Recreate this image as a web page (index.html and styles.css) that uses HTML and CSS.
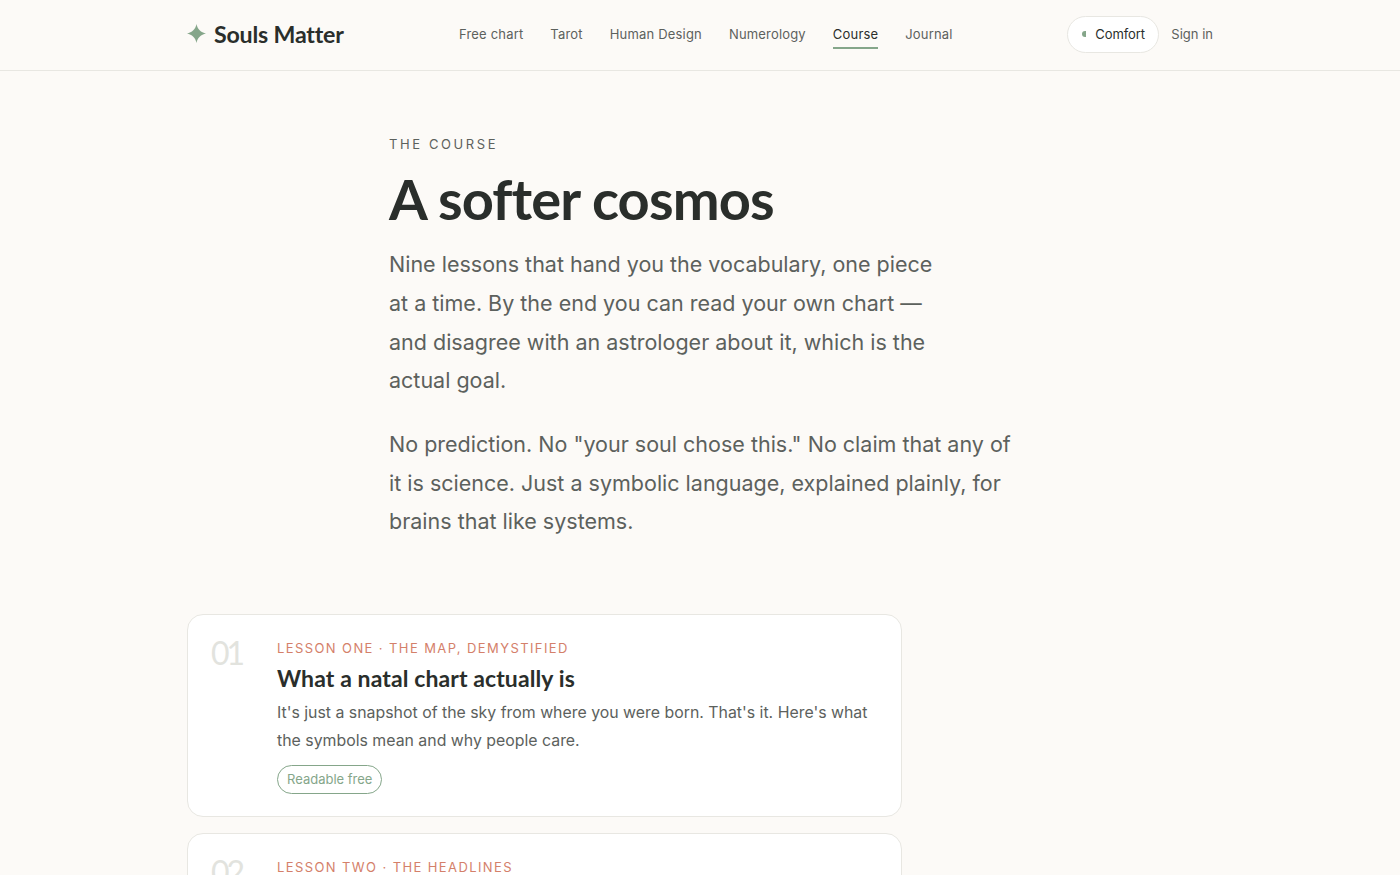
FILE: index.html
```html
<!DOCTYPE html>
<html lang="en">
<head>
<meta charset="utf-8">
<title>Souls Matter</title>
<link rel="stylesheet" href="styles.css">
</head>
<body>
<header class="site-header">
  <div class="header-inner">
    <a class="logo" href="#">
      <svg class="logo-star" viewBox="0 0 20 20" width="19" height="19"><path d="M10 0 C10.9 5.2 14.8 9.1 20 10 C14.8 10.9 10.9 14.8 10 20 C9.1 14.8 5.2 10.9 0 10 C5.2 9.1 9.1 5.2 10 0Z"/></svg>
      <span>Souls Matter</span>
    </a>
    <nav class="nav">
      <a href="#">Free chart</a>
      <a href="#">Tarot</a>
      <a href="#">Human Design</a>
      <a href="#">Numerology</a>
      <a href="#" class="active">Course</a>
      <a href="#">Journal</a>
    </nav>
    <div class="header-actions">
      <button class="comfort"><span class="comfort-dot"></span>Comfort</button>
      <a class="signin" href="#">Sign in</a>
    </div>
  </div>
</header>
<main class="page">
  <section class="intro">
    <p class="eyebrow">THE COURSE</p>
    <h1>A softer cosmos</h1>
    <p class="lead">Nine lessons that hand you the vocabulary, one piece at a time. By the end you can read your own chart — and disagree with an astrologer about it, which is the actual goal.</p>
    <p class="lead wide">No prediction. No "your soul chose this." No claim that any of it is science. Just a symbolic language, explained plainly, for brains that like systems.</p>
  </section>
  <section class="lessons">
    <article class="card">
      <div class="num">01</div>
      <div class="card-body">
        <p class="kicker">LESSON ONE · THE MAP, DEMYSTIFIED</p>
        <h2>What a natal chart actually is</h2>
        <p class="desc">It's just a snapshot of the sky from where you were born. That's it. Here's what the symbols mean and why people care.</p>
        <span class="tag">Readable free</span>
      </div>
    </article>
    <article class="card">
      <div class="num">02</div>
      <div class="card-body">
        <p class="kicker">LESSON TWO · THE HEADLINES</p>
        <h2>Sun, Moon, and Rising</h2>
        <p class="desc">The three placements everyone asks about, and what they are supposed to describe.</p>
      </div>
    </article>
  </section>
</main>
</body>
</html>
```
FILE: styles.css
```css
* { box-sizing: border-box; }
html, body { margin: 0; height: 875px; overflow: hidden; }
body { background: #fcfaf7; color: #2a2e2b; font-family: Inter, sans-serif; }
a { color: inherit; text-decoration: none; }
.site-header { height: 71px; border-bottom: 1px solid #e8e7e2; }
.header-inner { width: 1026px; margin: 0 auto; height: 69px; display: flex; align-items: center; }
.logo { display: flex; align-items: center; gap: 8px; margin-bottom: 2px; font-family: Lato, sans-serif; font-weight: 700; font-size: 23.2px; letter-spacing: -0.2px; color: #2a2e2b; width: 272px; }
.logo-star { fill: #85a68a; flex: none; }
.nav { display: flex; gap: 27px; margin-bottom: 2px; font-size: 13px; color: #5c615d; }
.nav a { padding: 7px 0 5px; letter-spacing: 0.18px; border-bottom: 2px solid transparent; }
.nav a.active { color: #2a2e2b; border-bottom-color: #85a68a; }
.header-actions { margin-left: auto; display: flex; align-items: center; gap: 12px; font-size: 13px; color: #5c615d; }
.comfort { height: 37px; width: 92px; padding: 0 0 2px 14px; display: flex; align-items: center; gap: 9px; border: 1px solid #e8e7e2; border-radius: 19px; background: #fff; font: inherit; letter-spacing: -0.1px; color: #2a2e2b; }
.comfort-dot { width: 4px; height: 6px; background: #85a68a; border-radius: 4px 0 0 4px; }
.signin { margin-bottom: 2px; }
.page { width: 1026px; margin: 0 auto; }
.intro { width: 622px; margin: 0 auto; padding-top: 65px; }
.eyebrow { margin: 0; font-size: 13px; line-height: 16px; letter-spacing: 2.6px; color: #5c615d; }
h1 { margin: 13px 0 0; font-family: Lato, sans-serif; font-weight: 700; font-size: 56px; line-height: 68px; letter-spacing: -0.85px; color: #2a2e2b; }
.lead { margin: 12.4px 0 0; width: 560px; font-size: 21.5px; line-height: 38.6px; color: #5c615d; }
.lead.wide { width: 624px; margin-top: 25.3px; }
.lessons { margin-top: 73.3px; width: 715px; display: flex; flex-direction: column; gap: 15.6px; }
.card { display: flex; background: #fff; border: 1px solid #e8e7e2; border-radius: 16px; padding: 23px 23px 22px; }
.num { width: 66px; flex: none; font-family: Lato, sans-serif; font-weight: 400; font-size: 32px; line-height: 30px; letter-spacing: -3px; color: #e2e3de; }
.kicker { margin: 0; font-size: 13px; line-height: 20px; letter-spacing: 1.4px; color: #d4806a; }
h2 { margin: 4.5px 0 0; font-family: Lato, sans-serif; font-weight: 700; font-size: 23px; line-height: 30px; letter-spacing: 0.1px; color: #2a2e2b; }
.desc { margin: 6.5px 0 0; font-size: 15.87px; line-height: 28px; color: #5c615d; }
.tag { display: block; width: fit-content; margin-top: 10px; height: 29px; padding: 0 9px; border: 1px solid #85a68a; border-radius: 15px; font-size: 13px; line-height: 27px; color: #85a68a; }
```
